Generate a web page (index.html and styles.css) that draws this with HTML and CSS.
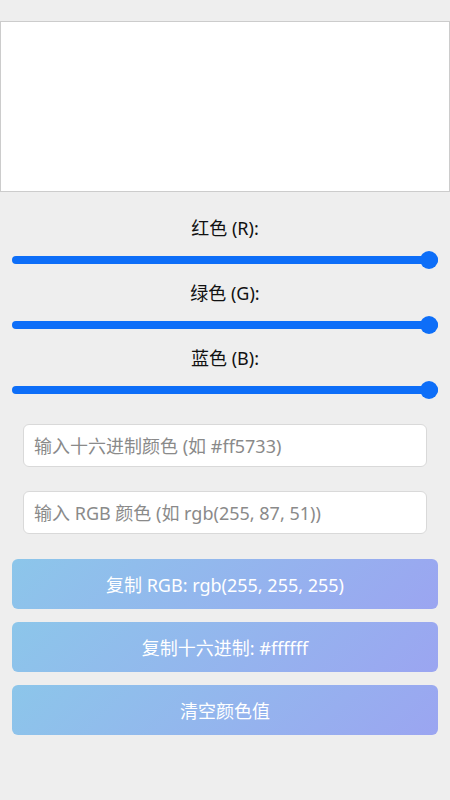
FILE: index.html
```html
<!DOCTYPE html>
<html lang="zh">
<head>
<meta charset="utf-8">
<title>颜色选择器</title>
<link rel="stylesheet" href="styles.css">
</head>
<body>
<div class="app">
  <div class="preview"></div>
  <div class="sliders">
    <label class="label">红色 (R):</label>
    <input class="range" type="range" min="0" max="255" value="255">
    <label class="label">绿色 (G):</label>
    <input class="range" type="range" min="0" max="255" value="255">
    <label class="label">蓝色 (B):</label>
    <input class="range" type="range" min="0" max="255" value="255">
  </div>
  <div class="inputs">
    <input class="field" type="text" placeholder="输入十六进制颜色 (如 #ff5733)">
    <input class="field" type="text" placeholder="输入 RGB 颜色 (如 rgb(255, 87, 51))">
  </div>
  <div class="buttons">
    <button class="btn">复制 RGB: rgb(255, 255, 255)</button>
    <button class="btn">复制十六进制: #ffffff</button>
    <button class="btn">清空颜色值</button>
  </div>
</div>
</body>
</html>
```
FILE: styles.css
```css
html, body {
  margin: 0;
  padding: 0;
  background: #eeeeee;
}
body {
  font-family: "Noto Sans", "Noto Sans CJK SC", sans-serif;
  color: #111;
}
.app {
  display: flex;
  flex-direction: column;
  padding-top: 21px;
}
.preview {
  height: 169px;
  background: #ffffff;
  border: 1px solid #cccccc;
}
.sliders {
  display: flex;
  flex-direction: column;
  align-items: stretch;
  padding: 24px 12px 0;
}
.label {
  display: block;
  text-align: center;
  font-size: 18px;
  line-height: 24px;
  height: 24px;
  margin-bottom: 11px;
}
.range {
  -webkit-appearance: none;
  appearance: none;
  width: 100%;
  height: 18px;
  margin: 0 0 12px;
  background: transparent;
}
.range::-webkit-slider-runnable-track {
  height: 8px;
  border-radius: 4px;
  background: #0d6ef8;
}
.range::-webkit-slider-thumb {
  -webkit-appearance: none;
  appearance: none;
  width: 18px;
  height: 18px;
  border-radius: 50%;
  background: #0d6ef8;
  margin-top: -5px;
}
.inputs {
  display: flex;
  flex-direction: column;
  gap: 24px;
  padding: 13px 23px 0;
}
.field {
  box-sizing: border-box;
  height: 43px;
  width: 100%;
  border: 1px solid #d9d9d9;
  border-radius: 6px;
  background: #ffffff;
  padding: 0 10px;
  font-family: inherit;
  font-size: 18px;
  color: #333;
}
.field::placeholder {
  color: #8a8a8a;
}
.buttons {
  display: flex;
  flex-direction: column;
  gap: 13px;
  padding: 25px 12px 0;
}
.btn {
  height: 50px;
  border: none;
  border-radius: 6px;
  background: linear-gradient(135deg, #8cc6ea 0%, #9ba5f1 100%);
  color: #ffffff;
  font-family: inherit;
  font-size: 18px;
  cursor: pointer;
}
```
